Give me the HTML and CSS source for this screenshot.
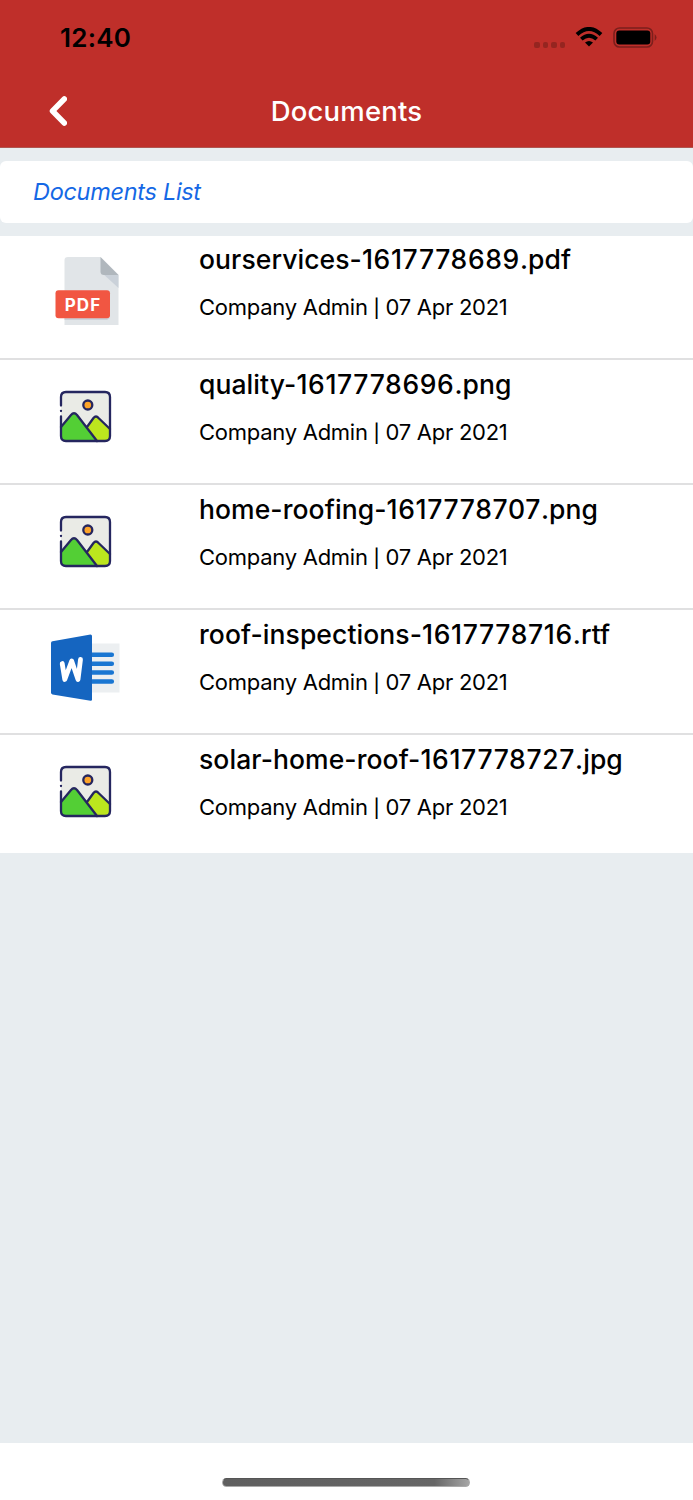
FILE: index.html
```
<!DOCTYPE html>
<html lang="en">
<head>
    <meta charset="UTF-8">
    <meta name="viewport" content="width=device-width, initial-scale=1.0">
    <title>Documents</title>
    <link rel="stylesheet" href="styles.css">
</head>
<body>
    <svg class="symbols" aria-hidden="true">
        <symbol id="icon-image" viewBox="0 0 54 54">
            <path d="M7 2H46Q51 2 51 7V46Q51 51 46 51H7Q2 51 2 46V7Q2 2 7 2Z" fill="#eaebe6"/>
            <path d="M25 40L34.5 28Q37 25 39.500 28L51 39V46Q51 51 46 51H34Z" fill="#bce61e"/>
            <path d="M2 37L12 25Q15 21.500 18 25L38 51H7Q2 51 2 46Z" fill="#53cf35"/>
            <g fill="none" stroke="#25265f" stroke-width="2.300" stroke-linecap="round" stroke-linejoin="round">
                <path d="M2 15.500V7Q2 2 7 2H46Q51 2 51 7V46Q51 51 46 51H7Q2 51 2 46V26.500M2 20.800V21"/>
                <path d="M2 37L12 25Q15 21.500 18 25L38 51M28 37L34.500 28Q37 25 39.500 28L51 39"/>
            </g>
            <circle cx="28.800" cy="15" r="4.500" fill="#fda429" stroke="#25265f" stroke-width="2.300"/>
        </symbol>
    </svg>

    <header class="header">
        <div class="status-bar">
            <span class="time">12:40</span>
            <div class="status-icons">
                <div class="dots"><i></i><i></i><i></i><i></i></div>
                <svg class="wifi" viewBox="0 0 28 20">
                    <path d="M2 7.500Q14-3.500 26 7.500" fill="none" stroke="#000" stroke-width="4"/>
                    <path d="M6.300 12.200Q14 5.300 21.700 12.200" fill="none" stroke="#000" stroke-width="3.800"/>
                    <path d="M10 15.500Q14 12.300 18 15.500L14 19.600Z"/>
                </svg>
                <svg class="battery" viewBox="0 0 44 22">
                    <rect x="1" y="1" width="38.500" height="19" rx="5.500" fill="none" stroke="#7c1f1c" stroke-width="1.600"/>
                    <rect x="3.300" y="3.500" width="34" height="14" rx="3"/>
                    <path d="M41.700 7Q45.300 10.500 41.700 14Z" fill="#7c1f1c"/>
                </svg>
            </div>
        </div>
        <div class="nav-bar">
            <svg class="back" viewBox="0 0 18 30">
                <path d="M15.300 3L3.500 15L15.300 27" fill="none" stroke="#fff" stroke-width="5.500" stroke-linecap="round" stroke-linejoin="round"/>
            </svg>
            <h1>Documents</h1>
        </div>
    </header>

    <main class="content">
        <div class="list-title">Documents List</div>
        <ul class="documents">
            <li class="document">
                <div class="file-icon">
                    <svg class="pdf" viewBox="0 0 66 70">
                        <path d="M13 1H45.500L63.500 19V69H9.500V4Q9.500 1 13 1Z" fill="#e1e5e8"/>
                        <path d="M47 17L63.500 32V19Z" fill="#cad1d9"/>
                        <path d="M45.500 1L63.500 19H49Q45.500 19 45.500 15.500Z" fill="#b0b7bd"/>
                        <path d="M9.500 62H55L52 64H9.500Z" fill="#cad1d9"/>
                        <rect x=".5" y="34.300" width="54.500" height="28" rx="3" fill="#f15642"/>
                        <text class="pdf-label" x="28" y="54.500" text-anchor="middle">PDF</text>
                    </svg>
                </div>
                <div class="file-info">
                    <h2>ourservices-<span>1617778689</span>.pdf</h2>
                    <p>Company Admin <span>|</span> 07 Apr 2021</p>
                </div>
            </li>
            <li class="document">
                <div class="file-icon"><svg class="image"><use href="#icon-image"/></svg></div>
                <div class="file-info">
                    <h2>quality-<span>1617778696</span>.png</h2>
                    <p>Company Admin <span>|</span> 07 Apr 2021</p>
                </div>
            </li>
            <li class="document">
                <div class="file-icon"><svg class="image"><use href="#icon-image"/></svg></div>
                <div class="file-info">
                    <h2>home-roofing-<span>1617778707</span>.png</h2>
                    <p>Company Admin <span>|</span> 07 Apr 2021</p>
                </div>
            </li>
            <li class="document">
                <div class="file-icon">
                    <svg class="word" viewBox="0 0 70 68">
                        <path d="M39 9.500H68.500V58.500H39Z" fill="#eceff1"/>
                        <path d="M40 20.700H60.800M40 29.700H60.800M40 38.500H60.800M40 47.500H60.800" stroke="#1976d2" stroke-width="4.600" stroke-linecap="round"/>
                        <path d="M0 9Q0 7.500 1.500 7.200L39.500.5Q41 .5 41 2V65.500Q41 67 39.500 66.800L1.500 60.500Q0 60 0 58.500Z" fill="#1565c0"/>
                        <path d="M11.200 29.500L13.800 45.500L20.700 27L27 45.500L29.500 25.500" fill="none" stroke="#fff" stroke-width="4.800" stroke-linecap="round" stroke-linejoin="round"/>
                    </svg>
                </div>
                <div class="file-info">
                    <h2>roof-inspections-<span>1617778716</span>.rtf</h2>
                    <p>Company Admin <span>|</span> 07 Apr 2021</p>
                </div>
            </li>
            <li class="document">
                <div class="file-icon"><svg class="image"><use href="#icon-image"/></svg></div>
                <div class="file-info">
                    <h2>solar-home-roof-<span>1617778727</span>.jpg</h2>
                    <p>Company Admin <span>|</span> 07 Apr 2021</p>
                </div>
            </li>
        </ul>
    </main>

    <footer class="footer">
        <div class="home-indicator"></div>
    </footer>
</body>
</html>
```

FILE: styles.css
```
* {
    margin: 0;
    padding: 0;
    box-sizing: border-box;
}

body {
    display: flex;
    flex-direction: column;
    height: 1500px;
    background: #e8edf0;
    color: #000;
    font-family: Inter, "Liberation Sans", sans-serif;
}

.symbols {
    display: none;
}

svg {
    display: block;
}

.header {
    height: 148px;
    background: #bf2f2a;
    border-bottom: 1px solid #b05650;
}

.status-bar {
    display: flex;
    justify-content: space-between;
    height: 75px;
    padding: 0 36px 0 60px;
}

.time {
    padding-top: 22px;
    font-size: 26px;
    font-weight: 600;
    line-height: 32px;
    letter-spacing: 0.25px;
}

.status-icons {
    display: flex;
    padding-top: 27px;
}

.dots {
    display: flex;
    gap: 3px;
    padding-top: 15px;
    margin-right: 10px;
}

.dots i {
    width: 5.5px;
    height: 5.5px;
    border-radius: 2px;
    background: #952520;
}

.wifi {
    width: 28px;
    height: 20px;
    margin-right: 10px;
}

.battery {
    width: 44px;
    height: 22px;
}

.nav-bar {
    display: grid;
    grid-template-columns: 100px 1fr 100px;
    align-items: center;
    height: 72px;
}

.back {
    width: 18px;
    height: 30px;
    margin-left: 49px;
}

.nav-bar h1 {
    color: #fff;
    font-size: 27.5px;
    font-weight: 500;
    letter-spacing: 0.2px;
    text-align: center;
}

.content {
    flex: 1;
    padding-top: 13px;
}

.list-title {
    height: 62px;
    padding-left: 33px;
    margin-bottom: 12.5px;
    border-radius: 6px;
    background: #fff;
    color: #1568e5;
    font-size: 23.5px;
    font-style: italic;
    letter-spacing: -0.3px;
    line-height: 61px;
}

.documents {
    list-style: none;
    background: #fff;
}

.document {
    display: flex;
    height: 125.1px;
    border-bottom: 2px solid #e0e0e1;
}

.document:first-child {
    height: 124px;
}

.document:last-child {
    height: 118.5px;
    border-bottom: none;
}

.file-icon {
    width: 199px;
    padding: 30px 0 0 59px;
}

.document:first-child .file-icon {
    padding: 20.5px 0 0 55px;
}

.file-icon:has(.word) {
    padding: 24px 0 0 51px;
}

.image {
    width: 54px;
    height: 54px;
}

.pdf {
    width: 66px;
    height: 70px;
}

.pdf-label {
    fill: #fff;
    font-size: 17px;
    font-weight: 700;
    letter-spacing: 1px;
}

.word {
    width: 70px;
    height: 68px;
}

.file-info {
    padding-top: 8px;
}

.document:first-child .file-info {
    padding-top: 7.5px;
}

.file-info h2 {
    font-size: 26.5px;
    font-weight: 500;
    letter-spacing: 0.08px;
    line-height: 33px;
    white-space: nowrap;
}

.file-info h2 span {
    letter-spacing: 0.65px;
}

.file-info p {
    margin-top: 17px;
    font-size: 22px;
    letter-spacing: -0.26px;
    line-height: 29px;
    white-space: nowrap;
}

.file-info p span {
    font-size: 18px;
    font-weight: 500;
}

.footer {
    height: 57px;
    padding-top: 35px;
    background: #fff;
}

.home-indicator {
    width: 248px;
    height: 9px;
    margin-left: 222px;
    border: 1px solid #aaa;
    border-top-color: #555;
    border-radius: 5px;
    background: linear-gradient(90deg, #5f5f5f, #666 86%, #a5a5a5);
}
```
